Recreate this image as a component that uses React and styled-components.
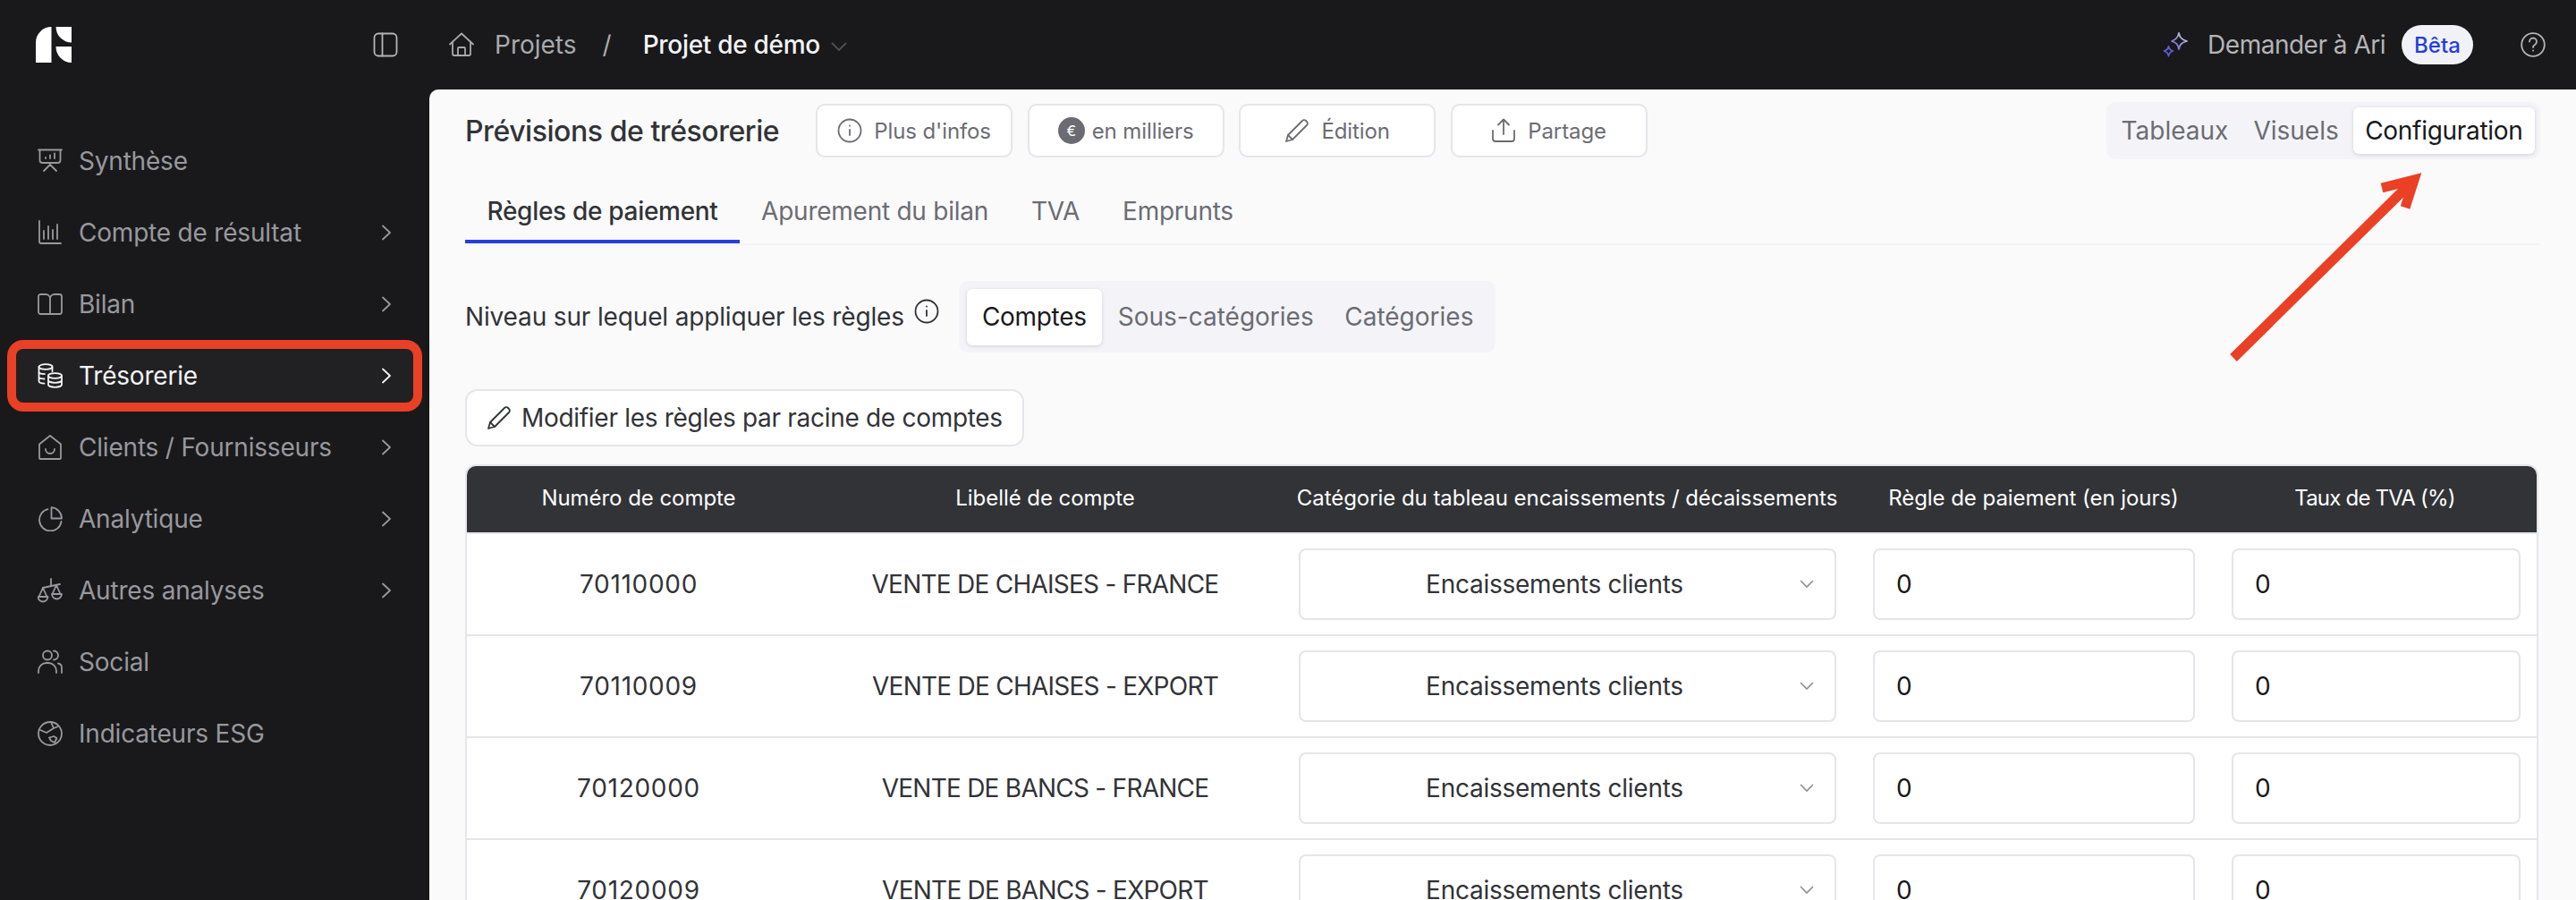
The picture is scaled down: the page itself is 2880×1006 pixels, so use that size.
import React from "react";
import styled, { createGlobalStyle } from "styled-components";

const GlobalStyle = createGlobalStyle`
  html, body { margin: 0; padding: 0; background: #19191b; }
  * { box-sizing: border-box; }
  body { font-family: "Inter", "Liberation Sans", sans-serif; }
`;

const Root = styled.div`
  position: relative;
  display: flex;
  flex-direction: column;
  height: 100vh;
  overflow: hidden;
  background: #19191b;
`;

const TopBar = styled.header`
  display: flex;
  align-items: center;
  flex: 0 0 100px;
  padding: 0 34px 0 40px;
`;
const BrandBlock = styled.div`
  display: flex;
  align-items: center;
  justify-content: space-between;
  width: 405px;
  margin-right: 57px;
  color: #b4b4b8;
`;
const Crumbs = styled.div`
  display: flex;
  align-items: center;
  font-size: 28px;
  color: #a9a9ae;
`;
const CrumbLabel = styled.span`
  margin-left: 23px;
`;
const CrumbSep = styled.span`
  margin: 0 35px 0 29px;
  color: #a9a9ae;
`;
const CrumbCurrent = styled.span`
  color: #f4f4f6;
  font-weight: 500;
  letter-spacing: -0.3px;
`;
const CrumbChevron = styled.svg`
  margin-left: 12px;
  margin-top: 4px;
  color: #4f4f55;
`;
const TopRight = styled.div`
  display: flex;
  align-items: center;
  margin-left: auto;
  font-size: 28px;
  color: #b4b4b8;
`;
const AskLabel = styled.span`
  margin: 0 18px 0 22px;
  letter-spacing: -0.5px;
`;
const BetaBadge = styled.span`
  display: flex;
  align-items: center;
  justify-content: center;
  width: 80px;
  height: 44px;
  border-radius: 22px;
  background: #f1f1f8;
  color: #2440d8;
  font-size: 24px;
  font-weight: 500;
`;
const HelpWrap = styled.span`
  display: flex;
  margin-left: 53px;
  color: #b4b4b8;
`;

const Body = styled.div`
  display: flex;
  flex: 1;
  min-height: 0;
`;
const Sidebar = styled.nav`
  display: flex;
  flex-direction: column;
  flex: 0 0 480px;
  gap: 20px;
  padding: 50px 18px 0;
`;
const NavItem = styled.div`
  display: flex;
  align-items: center;
  height: 60px;
  padding: 0 25px 0 24px;
  border-radius: 8px;
  font-size: 28px;
  letter-spacing: -0.2px;
  color: ${(p) => (p.$active ? "#f4f4f6" : "#98989e")};
  background: ${(p) => (p.$active ? "#212123" : "transparent")};
  box-shadow: ${(p) => (p.$active ? "0 0 0 10px #ea4025" : "none")};
`;
const NavLabel = styled.span`
  margin-left: 18px;
  flex: 1;
`;

const Main = styled.main`
  flex: 1;
  min-width: 0;
  padding: 14px 42px 0 40px;
  background: #fafafb;
  border-top-left-radius: 10px;
`;
const TopSection = styled.div`
  margin-right: -2px;
`;
const TitleRow = styled.div`
  display: flex;
  align-items: center;
  height: 64px;
`;
const Title = styled.h1`
  margin: 0 41px 0 0;
  font-size: 32px;
  font-weight: 500;
  letter-spacing: -0.45px;
  color: #323337;
`;
const ActionGroup = styled.div`
  display: flex;
  gap: 16.5px;
`;
const ActionButton = styled.button`
  display: flex;
  align-items: center;
  justify-content: center;
  gap: ${(p) => p.$gap || 13}px;
  width: 220px;
  height: 60px;
  padding: 0;
  background: #fff;
  border: 2px solid #e5e5ea;
  border-radius: 10px;
  font: inherit;
  font-size: 24px;
  letter-spacing: -0.1px;
  color: #6c6c73;
`;
const EuroBadge = styled.span`
  display: flex;
  align-items: center;
  justify-content: center;
  width: 30px;
  height: 30px;
  border-radius: 50%;
  background: #6b6b72;
  color: #fff;
  font-size: 16px;
`;
const Segment = styled.div`
  display: flex;
  align-items: center;
  gap: ${(p) => p.$gap || 0}px;
  height: ${(p) => p.$height}px;
  padding: 0 ${(p) => p.$right}px 0 ${(p) => p.$left}px;
  background: #f4f4f8;
  border-radius: 10px;
  font-size: 28px;
  margin-left: ${(p) => (p.$end ? "auto" : "0")};
`;
const SegmentItem = styled.span`
  display: flex;
  align-items: center;
  height: ${(p) => p.$height}px;
  padding: 0 ${(p) => p.$pad}px;
  border-radius: 6px;
  letter-spacing: ${(p) => (p.$active ? "-0.3px" : "0")};
  color: ${(p) => (p.$active ? "#19191b" : "#6c6c73")};
  background: ${(p) => (p.$active ? "#fff" : "transparent")};
  box-shadow: ${(p) => (p.$active ? "0 1px 4px rgba(40, 40, 70, 0.18)" : "none")};
`;
const TabRow = styled.div`
  display: flex;
  margin-top: 26px;
  border-bottom: 2px solid #f2f2f6;
`;
const Tab = styled.div`
  display: flex;
  align-items: center;
  height: 68px;
  padding: 0 ${(p) => (p.$active ? 24.5 : 24)}px;
  border-bottom: 4px solid ${(p) => (p.$active ? "#2440d8" : "transparent")};
  font-size: 28px;
  letter-spacing: ${(p) => (p.$active ? "-0.3px" : "-0.25px")};
  font-weight: ${(p) => (p.$active ? 500 : 400)};
  color: ${(p) => (p.$active ? "#323337" : "#6c6c73")};
`;
const LevelRow = styled.div`
  display: flex;
  align-items: center;
  margin-top: 40px;
  font-size: 28px;
  color: #323337;
`;
const LevelLabel = styled.span`
  letter-spacing: -0.15px;
`;
const InfoWrap = styled.span`
  display: flex;
  margin: 0 22px 13px 11px;
  color: #323337;
`;
const EditButton = styled.button`
  display: flex;
  align-items: center;
  gap: 11px;
  height: 64px;
  margin: 41px 0 20px;
  padding: 0 22px;
  background: #fff;
  border: 2px solid #e5e5ea;
  border-radius: 14px;
  font: inherit;
  font-size: 28px;
  letter-spacing: -0.3px;
  color: #323337;
`;

const TableFrame = styled.div`
  border: 2px solid #e5e5ea;
  border-bottom: 0;
  border-radius: 12px 12px 0 0;
  overflow: hidden;
  background: #fff;
`;
const COLUMNS = "384px 525px 642px 401px 1fr";
const HeadRow = styled.div`
  display: grid;
  grid-template-columns: ${COLUMNS};
  align-items: center;
  height: 74px;
  padding-bottom: 3px;
  background: #323337;
  color: #fff;
  font-size: 24px;
  font-weight: 400;
  text-align: center;
`;
const HeadCell = styled.div`
  letter-spacing: ${(p) => (p.$tight ? "-0.8px" : "-0.05px")};
`;
const DataRow = styled.div`
  display: grid;
  grid-template-columns: ${COLUMNS};
  align-items: center;
  height: 114px;
  border-top: 2px solid #e5e5ea;
  font-size: 28px;
  color: #323337;
`;
const CodeCell = styled.div`
  text-align: center;
  letter-spacing: 0.7px;
`;
const LabelCell = styled.div`
  text-align: center;
  letter-spacing: -0.75px;
`;
const FieldCell = styled.div`
  padding: 0 ${(p) => (p.$last ? 18 : 20)}px 0 21px;
`;
const SelectBox = styled.div`
  display: flex;
  align-items: center;
  height: 80px;
  padding: 0 23px 0 10px;
  border: 2px solid #e5e5ea;
  border-radius: 8px;
  background: #fff;
  color: #323337;
`;
const SelectText = styled.span`
  flex: 1;
  text-align: center;
  letter-spacing: -0.25px;
`;
const SelectChevron = styled.svg`
  color: #8e8e94;
`;
const NumberBox = styled.div`
  display: flex;
  align-items: center;
  height: 80px;
  padding: 0 24px;
  border: 2px solid #e5e5ea;
  border-radius: 8px;
  background: #fff;
  color: #19191b;
`;
const Arrow = styled.svg`
  position: absolute;
  top: 185px;
  left: 2480px;
  color: #ea4025;
`;

const Icon = ({ size = 28, children, w = 1.8 }) => (
  <svg width={size} height={size} viewBox="0 0 28 28" fill="none" stroke="currentColor" strokeWidth={w} strokeLinecap="round" strokeLinejoin="round">
    {children}
  </svg>
);

const Logo = () => (
  <svg width="40" height="40" viewBox="0 0 40 40" fill="#fff">
    <path d="M17.5 0V40H0V17.5A17.5 17.5 0 0 1 17.5 0Z" />
    <path d="M22.5 0H40V17.5A17.5 17.5 0 0 1 22.5 0Z" />
    <path d="M22.5 22H40V40A17.5 18 0 0 1 22.5 22Z" />
  </svg>
);

const SlideIcon = () => (
  <Icon>
    <path d="M1 1.5H27M2.5 1.5V13a3 3 0 0 0 3 3h17a3 3 0 0 0 3-3V1.5" />
    <path d="M9 11v-1M14 11V7.5M19 11V5.5M14 16v3M14 18l-7 7M14 18l7 7" />
  </Icon>
);
const ChartIcon = () => (
  <Icon>
    <path d="M2 1v23a2 2 0 0 0 2 2h22" />
    <path d="M7 21v-9M12 21V7M17 21V11M22 21V5" />
  </Icon>
);
const BookIcon = () => (
  <Icon>
    <path d="M14 8a5 5 0 0 0-5-5H3.500a2.500 2.500 0 0 0-2.500 2.500v17a2.500 2.500 0 0 0 2.500 2.500h21a2.500 2.500 0 0 0 2.500-2.500v-17a2.500 2.500 0 0 0-2.500-2.500H19a5 5 0 0 0-5 5v17" />
  </Icon>
);
const CoinsIcon = () => (
  <Icon>
    <ellipse cx="9" cy="4" rx="7.500" ry="2.800" />
    <path d="M1.500 4v16c0 1.500 2.500 2.500 6 2.600M16.500 4v5M1.500 9.500c0 1.500 3 2.600 6.500 2.600M1.500 15c0 1.500 2.500 2.400 6 2.500" />
    <ellipse cx="19.500" cy="14" rx="7.500" ry="2.800" />
    <path d="M12 14v10c0 1.500 3.300 2.800 7.500 2.800S27 25.500 27 24V14M12 19c0 1.500 3.300 2.800 7.500 2.800S27 20.500 27 19" />
  </Icon>
);
const HouseIcon = () => (
  <Icon>
    <path d="M2 10.500 14 1l12 9.500V26a1 1 0 0 1-1 1H3a1 1 0 0 1-1-1z" />
    <path d="M9 16a5 5 0 0 0 10 0" />
  </Icon>
);
const PieIcon = () => (
  <Icon>
    <path d="M11.500 3.200A12.300 12.300 0 1 0 26.500 17" />
    <path d="M15.500 1.200A12.500 12.500 0 0 1 27 13.500H15.500z" />
  </Icon>
);
const ScaleIcon = () => (
  <Icon>
    <path d="M15 1v7M6 11l19-4" />
    <path d="M6 11 1.500 21M6 11l4.500 10M1.500 21h10a5.500 5.500 0 0 1-11 0" />
    <path d="M21 8l-4.500 10M21 8l4.500 10M16 18h11a5.500 5.500 0 0 1-11 0" />
  </Icon>
);
const PeopleIcon = () => (
  <Icon>
    <circle cx="11" cy="6.500" r="5" />
    <path d="M18 1.500a5 5 0 0 1 0 10M1 26v-2a9 9 0 0 1 9-9h2a9 9 0 0 1 9 9v2M23 15.500a5 5 0 0 1 4 5V26" />
  </Icon>
);
const GlobeIcon = () => (
  <Icon>
    <circle cx="14" cy="14" r="13" />
    <path d="M3 10l7 3 8-5-3-6.800M23 6l-5 2" />
    <path d="M13 18.500l5-1.500 3.500 2-2.500 5-4-2z" />
  </Icon>
);
const Chevron = () => (
  <svg width="10" height="18" viewBox="0 0 10 18" fill="none" stroke="currentColor" strokeWidth="1.800" strokeLinecap="round" strokeLinejoin="round">
    <path d="M1 1.500 9 9l-8 7.500" />
  </svg>
);
const PanelIcon = () => (
  <Icon>
    <rect x="1.500" y="1.500" width="25" height="25" rx="4.500" />
    <path d="M10.500 1.500v25" />
  </Icon>
);
const HomeIcon = () => (
  <Icon>
    <path d="M1 13.500 14 1.500l13 12M4 10.500V24a2 2 0 0 0 2 2h16a2 2 0 0 0 2-2V10.500" />
    <path d="M10 26v-8a1 1 0 0 1 1-1h6a1 1 0 0 1 1 1v8" />
  </Icon>
);
const SparkIcon = () => (
  <svg width="28" height="28" viewBox="0 0 28 28" fill="none" strokeWidth="1.800" strokeLinejoin="round">
    <defs>
      <linearGradient id="sparkFade" x1="1" y1="0" x2="0" y2="1">
        <stop offset="0" stopColor="#d4d4dc" />
        <stop offset="1" stopColor="#5f5fd8" />
      </linearGradient>
    </defs>
    <path d="M18 1c1 5 3 7 9 9-6 1.500-8 3.500-9 9-1-5.500-3-7.500-8-9 5-2 7-4 8-9Z" stroke="url(#sparkFade)" />
    <path d="M6.500 16c.6 2.800 1.700 4 4.800 5-3.100.9-4.200 2-4.800 5.500-.6-3.500-1.700-4.600-5-5.500 3.300-1 4.400-2.200 5-5Z" stroke="#5f5fd8" />
  </svg>
);
const InfoIcon = () => (
  <Icon>
    <circle cx="14" cy="14" r="12.500" />
    <path d="M14 13v6M14 8.500v.2" />
  </Icon>
);
const HelpIcon = () => (
  <Icon>
    <circle cx="14" cy="14" r="12.800" />
    <path d="M10 10.500a4 4 0 1 1 6 3.500c-1.300.7-2 1.500-2 3M14 20.500v.2" />
  </Icon>
);
const PencilIcon = () => (
  <Icon>
    <path d="M2 26l2-7L20 3a2.800 2.800 0 0 1 4 0l1 1a2.800 2.800 0 0 1 0 4L9 24z" />
    <path d="M4 19l5 5" />
  </Icon>
);
const ShareIcon = () => (
  <Icon>
    <path d="M14 18V2M8 7.500 14 1.500l6 6" />
    <path d="M2 14v9a3 3 0 0 0 3 3h18a3 3 0 0 0 3-3v-9" />
  </Icon>
);

const navItems = [
  { label: "Synthèse", icon: <SlideIcon /> },
  { label: "Compte de résultat", icon: <ChartIcon />, more: true },
  { label: "Bilan", icon: <BookIcon />, more: true },
  { label: "Trésorerie", icon: <CoinsIcon />, more: true, active: true },
  { label: "Clients / Fournisseurs", icon: <HouseIcon />, more: true },
  { label: "Analytique", icon: <PieIcon />, more: true },
  { label: "Autres analyses", icon: <ScaleIcon />, more: true },
  { label: "Social", icon: <PeopleIcon /> },
  { label: "Indicateurs ESG", icon: <GlobeIcon /> },
];

const rows = [
  { code: "70110000", label: "VENTE DE CHAISES - FRANCE" },
  { code: "70110009", label: "VENTE DE CHAISES - EXPORT" },
  { code: "70120000", label: "VENTE DE BANCS - FRANCE" },
  { code: "70120009", label: "VENTE DE BANCS - EXPORT" },
];

const headers = [
  { text: "Numéro de compte" },
  { text: "Libellé de compte" },
  { text: "Catégorie du tableau encaissements / décaissements" },
  { text: "Règle de paiement (en jours)" },
  { text: "Taux de TVA (%)", tight: true },
];

export default function App() {
  return (
    <Root>
      <GlobalStyle />
      <TopBar>
        <BrandBlock>
          <Logo />
          <PanelIcon />
        </BrandBlock>
        <Crumbs>
          <HomeIcon />
          <CrumbLabel>Projets</CrumbLabel>
          <CrumbSep>/</CrumbSep>
          <CrumbCurrent>Projet de démo</CrumbCurrent>
          <CrumbChevron width="18" height="10" viewBox="0 0 18 10" fill="none" stroke="currentColor" strokeWidth="1.800">
            <path d="M1 1l8 8 8-8" />
          </CrumbChevron>
        </Crumbs>
        <TopRight>
          <SparkIcon />
          <AskLabel>Demander à Ari</AskLabel>
          <BetaBadge>Bêta</BetaBadge>
          <HelpWrap>
            <HelpIcon />
          </HelpWrap>
        </TopRight>
      </TopBar>
      <Body>
        <Sidebar>
          {navItems.map((item) => (
            <NavItem key={item.label} $active={item.active}>
              {item.icon}
              <NavLabel>{item.label}</NavLabel>
              {item.more && <Chevron />}
            </NavItem>
          ))}
        </Sidebar>
        <Main>
          <TopSection>
            <TitleRow>
              <Title>Prévisions de trésorerie</Title>
              <ActionGroup>
                <ActionButton>
                  <InfoIcon />
                  Plus d'infos
                </ActionButton>
                <ActionButton $gap={8}>
                  <EuroBadge>€</EuroBadge>
                  en milliers
                </ActionButton>
                <ActionButton>
                  <PencilIcon />
                  Édition
                </ActionButton>
                <ActionButton>
                  <ShareIcon />
                  Partage
                </ActionButton>
              </ActionGroup>
              <Segment $end $height={64} $left={5} $right={6}>
                <SegmentItem $height={52} $pad={12}>Tableaux</SegmentItem>
                <SegmentItem $height={52} $pad={16}>Visuels</SegmentItem>
                <SegmentItem $height={52} $pad={13.5} $active>Configuration</SegmentItem>
              </Segment>
            </TitleRow>
            <TabRow>
              <Tab $active>Règles de paiement</Tab>
              <Tab>Apurement du bilan</Tab>
              <Tab>TVA</Tab>
              <Tab>Emprunts</Tab>
            </TabRow>
            <LevelRow>
              <LevelLabel>Niveau sur lequel appliquer les règles</LevelLabel>
              <InfoWrap>
                <InfoIcon />
              </InfoWrap>
              <Segment $height={80} $left={9} $right={8} $gap={1}>
                <SegmentItem $height={63} $pad={17} $active>Comptes</SegmentItem>
                <SegmentItem $height={63} $pad={17}>Sous-catégories</SegmentItem>
                <SegmentItem $height={63} $pad={16.5}>Catégories</SegmentItem>
              </Segment>
            </LevelRow>
          </TopSection>
          <EditButton>
            <PencilIcon />
            Modifier les règles par racine de comptes
          </EditButton>
          <TableFrame>
            <HeadRow>
              {headers.map((h) => (
                <HeadCell key={h.text} $tight={h.tight}>{h.text}</HeadCell>
              ))}
            </HeadRow>
            {rows.map((row) => (
              <DataRow key={row.code}>
                <CodeCell>{row.code}</CodeCell>
                <LabelCell>{row.label}</LabelCell>
                <FieldCell>
                  <SelectBox>
                    <SelectText>Encaissements clients</SelectText>
                    <SelectChevron width="16" height="10" viewBox="0 0 16 10" fill="none" stroke="currentColor" strokeWidth="1.600">
                      <path d="M1 1l7 7 7-7" />
                    </SelectChevron>
                  </SelectBox>
                </FieldCell>
                <FieldCell>
                  <NumberBox>0</NumberBox>
                </FieldCell>
                <FieldCell $last>
                  <NumberBox>0</NumberBox>
                </FieldCell>
              </DataRow>
            ))}
          </TableFrame>
        </Main>
      </Body>
      <Arrow width="240" height="230" viewBox="0 0 240 230" fill="none" stroke="currentColor">
        <path d="M17 215 215 20" strokeWidth="11" />
        <path d="M183 25 219 16 209 47" strokeWidth="11" />
      </Arrow>
    </Root>
  );
}
